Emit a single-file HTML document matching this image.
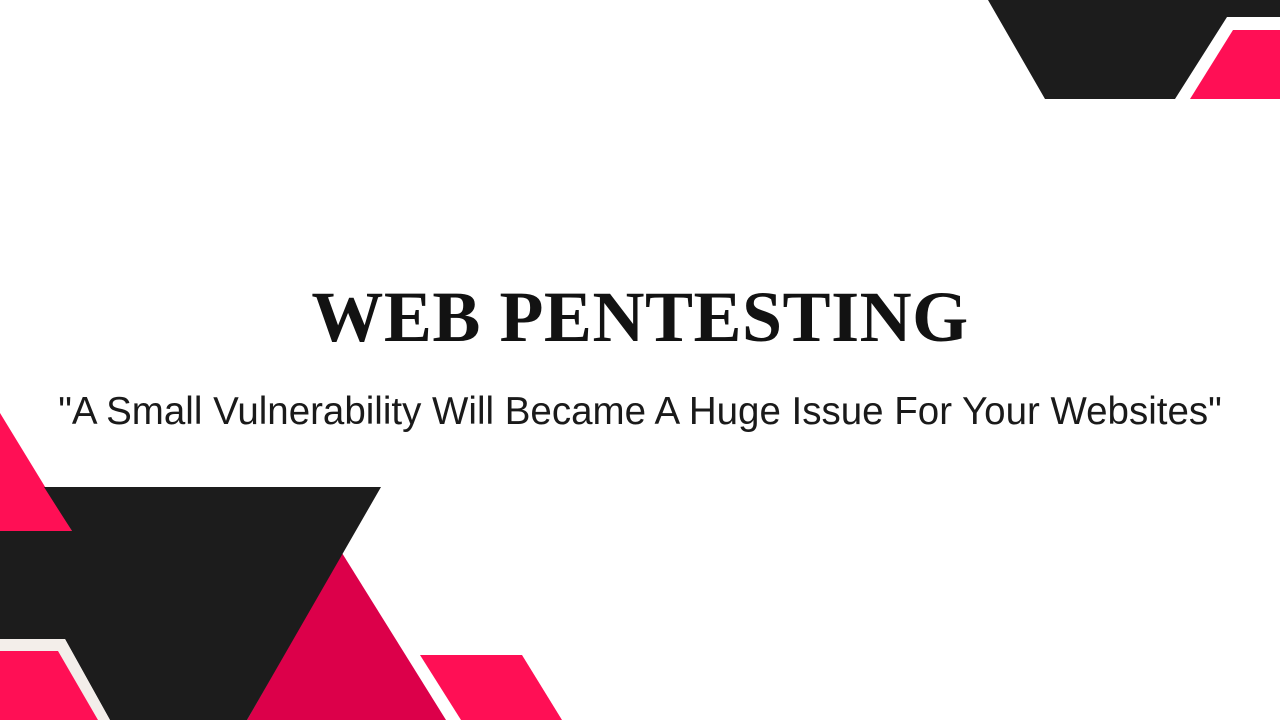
<!DOCTYPE html>
<html><head><meta charset="utf-8"><style>
html,body{margin:0;padding:0;width:1280px;height:720px;overflow:hidden;background:#fff}
svg{position:absolute;left:0;top:0}
.t{position:absolute;left:0;width:1280px;text-align:center;color:#121212;white-space:nowrap}
#h{top:272px;font:bold 72px/90px "Liberation Serif",serif;letter-spacing:0.5px}
#s{top:389px;font:38.5px/46px "Liberation Sans",sans-serif;color:#1a1a1a}
</style></head><body>
<svg width="1280" height="720">
<polygon points="988,0 1280,0 1280,17 1227,17 1175,99 1045,99" fill="#1c1c1c"/>
<polygon points="1233,30 1280,30 1280,99 1190,99" fill="#ff0f55"/>
<polygon points="0,413 72,531 0,531" fill="#ff0f55"/>
<polygon points="342,553 446,720 247,720" fill="#dc004a"/>
<polygon points="44,487 381,487 247,720 110,720 65,639 0,639 0,531 72,531" fill="#1c1c1c"/>
<polygon points="0,639 65,639 110,720 98,720 58,651 0,651" fill="#f3eeea"/>
<polygon points="0,651 58,651 98,720 0,720" fill="#ff0f55"/>
<polygon points="420,655 522,655 562,720 461,720" fill="#ff0f55"/>
</svg>
<div class="t" id="h">WEB PENTESTING</div>
<div class="t" id="s">"A Small Vulnerability Will Became A Huge Issue For Your Websites"</div>
</body></html>
